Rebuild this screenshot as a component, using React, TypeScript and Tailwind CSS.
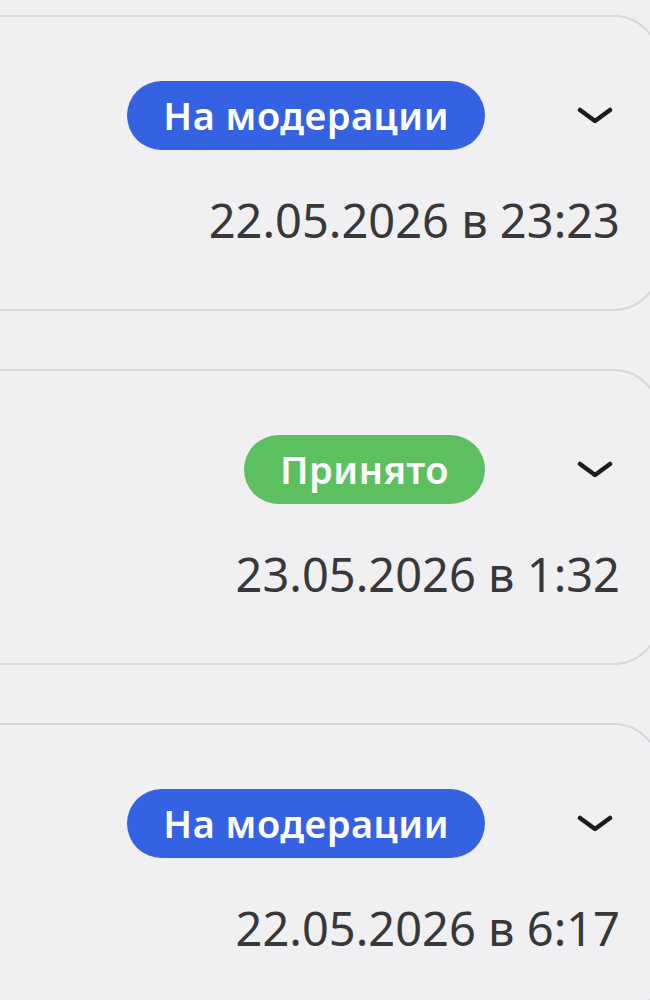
import React from "react";

type Item = { status: "moderation" | "accepted"; date: string };

const items: Item[] = [
  { status: "moderation", date: "22.05.2026 в 23:23" },
  { status: "accepted", date: "23.05.2026 в 1:32" },
  { status: "moderation", date: "22.05.2026 в 6:17" },
];

function Chevron() {
  return (
    <svg width="36" height="22" viewBox="0 0 36 22" fill="none" className="shrink-0">
      <path
        d="M3 5 L18 16 L33 5"
        stroke="#1c1c1e"
        strokeWidth="4.5"
        strokeLinecap="round"
        strokeLinejoin="round"
      />
    </svg>
  );
}

function StatusBadge({ status }: { status: Item["status"] }) {
  const isAccepted = status === "accepted";
  return (
    <span
      className={
        isAccepted
          ? "inline-flex h-[69px] items-center rounded-full bg-[#5cbf60] px-[36px] text-[38px] font-semibold tracking-[0.5px] text-white"
          : "inline-flex h-[69px] items-center rounded-full bg-[#3562e2] px-[36px] text-[38px] font-semibold tracking-[0.5px] text-white"
      }
    >
      {isAccepted ? "Принято" : "На модерации"}
    </span>
  );
}

function Card({ item }: { item: Item }) {
  return (
    <div className="ml-[-120px] mr-[-10px] h-[296px] rounded-[46px] border-2 border-[#d7d7da] pr-[38px] pt-[64px]">
      <div className="flex items-center justify-end gap-[92px] pr-[7px]">
        <StatusBadge status={item.status} />
        <Chevron />
      </div>
      <div className="mt-[42px] text-right text-[47px] leading-[56px] text-[#38383a]">
        {item.date}
      </div>
    </div>
  );
}

export default function App() {
  return (
    <div
      className="min-h-[1000px] w-[650px] overflow-hidden bg-[#f0f0f3] pt-[15px]"
      style={{ fontFamily: '"Noto Sans", "Open Sans", sans-serif' }}
    >
      <div className="flex flex-col gap-[58px]">
        {items.map((item, i) => (
          <Card key={i} item={item} />
        ))}
      </div>
    </div>
  );
}
